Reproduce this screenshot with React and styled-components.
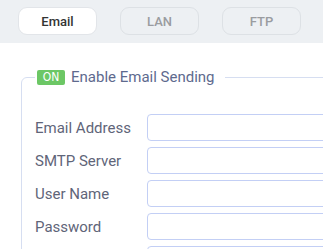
import styled, { createGlobalStyle } from "styled-components";

const GlobalStyle = createGlobalStyle`
  html, body {
    margin: 0;
    padding: 0;
    background: #ffffff;
    overflow: hidden;
    font-family: Roboto, "Liberation Sans", Arial, sans-serif;
  }
`;

const tabs = ["Email", "LAN", "FTP"];
// last row only peeks in at the bottom edge, its label is below the fold
const fields = ["Email Address", "SMTP Server", "User Name", "Password", ""];

function App() {
  return (
    <Page>
      <GlobalStyle />
      <TabBar>
        {tabs.map((t, i) => (
          <Tab key={t} active={i === 0}>
            {t}
          </Tab>
        ))}
      </TabBar>
      <Panel>
        <Legend>
          <Badge>ON</Badge>
          Enable Email Sending
        </Legend>
        {fields.map((f, i) => (
          <Row key={i}>
            <Label>{f}</Label>
            <Input type="text" />
          </Row>
        ))}
      </Panel>
    </Page>
  );
}

export default App;

const Page = styled.div`
  width: 323px;
  height: 249px;
  overflow: hidden;
`;

const TabBar = styled.div`
  display: flex;
  gap: 23px;
  height: 43px;
  padding: 7px 0 0 18px;
  box-sizing: border-box;
  background: #edf0f3;
`;

const Tab = styled.div`
  width: 79px;
  height: 28px;
  box-sizing: border-box;
  display: flex;
  align-items: center;
  justify-content: center;
  border-radius: 9px;
  font-size: 13px;
  font-weight: 500;
  border: 1px solid ${(p) => (p.active ? "#e2e5e9" : "#dde1e5")};
  background: ${(p) => (p.active ? "#ffffff" : "transparent")};
  color: ${(p) => (p.active ? "#333333" : "#9a9ca0")};
`;

const Panel = styled.fieldset`
  margin: 24px 0 0 21px;
  width: 420px;
  padding: 27px 0 0 13px;
  border: 1px solid #d6def1;
  border-radius: 6px;
  min-width: 0;
`;

const Legend = styled.legend`
  display: flex;
  align-items: center;
  gap: 6px;
  padding: 0 10px 0 2px;
  margin: 0;
  font-size: 15px;
  line-height: 20px;
  color: #5e6a8e;
`;

const Badge = styled.span`
  display: inline-flex;
  align-items: center;
  justify-content: center;
  width: 28px;
  height: 15px;
  background: #6cc765;
  color: #ffffff;
  border-radius: 2px;
  font-family: "DejaVu Sans Condensed", "Liberation Sans Narrow", sans-serif;
  font-size: 12px;
`;

const Row = styled.div`
  display: flex;
  align-items: center;
  margin-bottom: 6px;
`;

const Label = styled.label`
  width: 112px;
  flex: none;
  font-size: 15px;
  color: #5f6579;
`;

const Input = styled.input`
  width: 240px;
  height: 27px;
  box-sizing: border-box;
  border: 1px solid #c3cff5;
  border-radius: 4px;
  outline: none;
  background: #fff;
`;
